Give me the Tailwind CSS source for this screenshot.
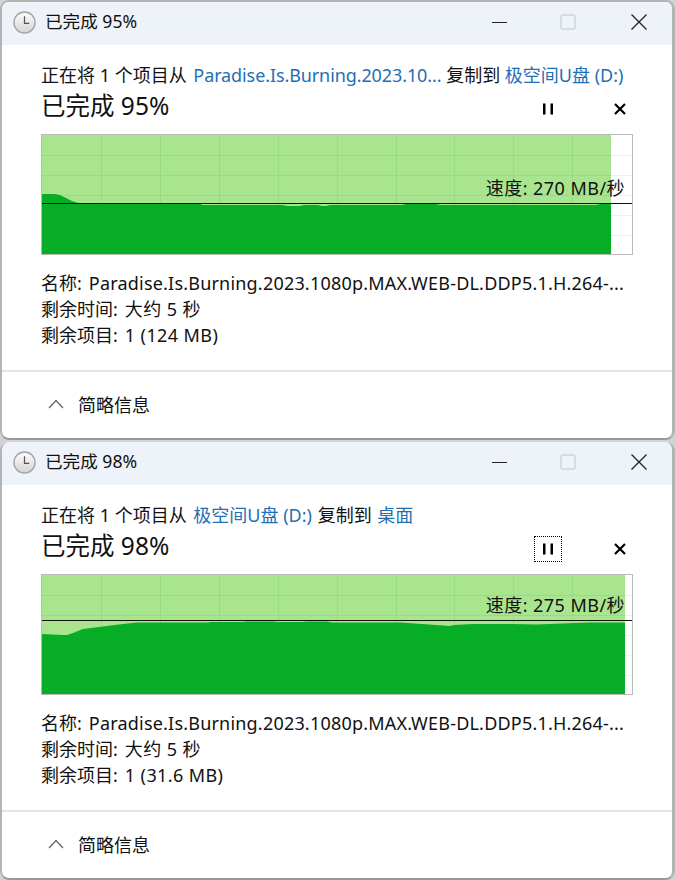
<!DOCTYPE html>
<html lang="zh-CN">
<head>
  <meta charset="UTF-8" />
  <meta name="viewport" content="width=device-width, initial-scale=1" />
  <title>已完成</title>
  <script src="https://cdn.jsdelivr.net/npm/@tailwindcss/browser@4"></script>
</head>
<body class="w-[675px] h-[880px] overflow-hidden bg-[#d2d2d2] text-[#111] font-['Noto_Sans','Noto_Sans_CJK_SC',sans-serif]">

  <!-- Window 1 -->
  <section class="h-[440px] bg-white border-x-[2px] border-t-[2px] border-b-[2px] border-x-[#b4b4b4] border-t-[#b4b4b4] border-b-[#9a9a9a] border-r-[3px] rounded-t-[9px] rounded-b-[9px] overflow-hidden">
    <header class="h-[43px] bg-[#edf3f8] flex items-center pl-[11px] pb-[3px]">
      <svg class="w-[23px] h-[23px] shrink-0" viewBox="0 0 24 24">
        <defs>
          <linearGradient id="clockFace" x1="0" y1="0" x2="0" y2="1">
            <stop offset="0" stop-color="#fdfdfd" />
            <stop offset="1" stop-color="#d4d4d4" />
          </linearGradient>
        </defs>
        <circle cx="12" cy="12" r="11" fill="url(#clockFace)" stroke="#a4a4a4" stroke-width="1.4" />
        <path d="M12 5.500V13H17" fill="none" stroke="#555" stroke-width="1.3" />
      </svg>
      <span class="ml-[9px] text-[17.6px] leading-none">已完成 95%</span>
      <div class="ml-auto flex items-center">
        <svg class="w-4 h-4" viewBox="0 0 16 16"><path d="M1 8.500H16" stroke="#222" stroke-width="1.2" /></svg>
        <svg class="w-4 h-4 ml-[53px]" viewBox="0 0 16 16"><rect x="1" y="1" width="14" height="14" rx="1.500" fill="#edf3f8" stroke="#cfd3d6" stroke-width="1.4" /></svg>
        <svg class="w-4 h-4 ml-[55px] mr-[25px]" viewBox="0 0 16 16"><path d="M.5.5L15.500 15.500M15.500.5L.5 15.500" stroke="#222" stroke-width="1.3" /></svg>
      </div>
    </header>
    <div class="pl-[39px] pt-[17px] text-[18px] leading-[26px]">
      <p class="whitespace-nowrap">正在将 1 个项目从 <span class="ml-[2px] tracking-[-.1px] text-[#1f6fb5]">Paradise.Is.Burning.2023.10...</span> 复制到 <span class="text-[#1f6fb5]">极空间U盘 (D:)</span></p>
      <div class="h-[36px] flex items-center">
        <h2 class="text-[24.5px] leading-none">已完成 95%</h2>
        <div class="ml-auto flex items-center mt-[5px]">
          <div class="w-7 h-[26px] flex items-center justify-center">
            <svg class="w-3 h-3" viewBox="0 0 12 12"><path d="M1 .5V11.500H3.500V.5ZM8.500 .5V11.500H11V.5Z" fill="#000" /></svg>
          </div>
          <div class="w-7 h-[26px] ml-[44px] mr-[38px] flex items-center justify-center">
            <svg class="w-3 h-3" viewBox="0 0 12 12"><path d="M1 1L11 11M11 1L1 11" stroke="#000" stroke-width="2.2" /></svg>
          </div>
        </div>
      </div>
      <div class="relative w-[592px] h-[121px] mt-[10px] border border-[#b9b9b9]">
        <svg class="block w-[590px] h-[119px]" viewBox="0 0 590 119">
          <rect width="590" height="119" fill="#fff" />
          <rect width="569" height="119" fill="#a9e58f" />
          <path d="M59.500 0V119M118.500 0V119M177.500 0V119M236.500 0V119M295.500 0V119M354.500 0V119M412.500 0V119M471.500 0V119M530.500 0V119" stroke="#95dc83" />
          <path d="M0 20.500H590M0 40.500H590M0 60.500H590M0 80.500H590M0 100.500H590" stroke="#95dc83" />
          <path d="M569 0V119H590V0Z" fill="#fff" opacity=".78" />
          <path d="M0 59H12L18 60L24 63L30 66L36 68H158L160 70H240L246 71H258L262 70H276L280 71H284L288 70H360L364 69H394L398 70H554L558 69H569V119H0Z" fill="#06ad25" />
          <path d="M0 68.500H590" stroke="#111" />
        </svg>
        <span class="absolute right-[7px] top-[41px] tracking-[.45px] leading-[24px] whitespace-nowrap">速度: 270 MB/秒</span>
      </div>
      <dl class="mt-[15px]">
        <div class="flex whitespace-nowrap"><dt>名称:</dt><dd class="ml-[7px] tracking-[.2px]">Paradise.Is.Burning.2023.1080p.MAX.WEB-DL.DDP5.1.H.264-...</dd></div>
        <div class="flex"><dt>剩余时间:</dt><dd class="ml-[7px] tracking-[.4px]">大约 5 秒</dd></div>
        <div class="flex"><dt>剩余项目:</dt><dd class="ml-[7px] tracking-[.4px]">1 (124 MB)</dd></div>
      </dl>
    </div>
    <div class="mt-[22px] border-t-[2px] border-[#e4e4e4] h-[66px] flex items-center pl-[46px]">
      <svg class="w-4 h-[10px]" viewBox="0 0 16 10"><path d="M1 9L8 1.500L15 9" fill="none" stroke="#666" stroke-width="1.3" /></svg>
      <span class="ml-[14px] mt-[2px] text-[18px]">简略信息</span>
    </div>
  </section>

  <!-- Window 2 -->
  <section class="mt-[2px] h-[438px] bg-white border-x-[2px] border-b-[2px] border-x-[#b4b4b4] border-b-[#9a9a9a] border-r-[3px] rounded-t-[9px] rounded-b-[9px] overflow-hidden">
    <header class="h-[43px] bg-[#edf3f8] flex items-center pl-[11px] pb-[3px]">
      <svg class="w-[23px] h-[23px] shrink-0" viewBox="0 0 24 24">
        <circle cx="12" cy="12" r="11" fill="url(#clockFace)" stroke="#a4a4a4" stroke-width="1.4" />
        <path d="M12 5.500V13H17" fill="none" stroke="#555" stroke-width="1.3" />
      </svg>
      <span class="ml-[9px] text-[17.6px] leading-none">已完成 98%</span>
      <div class="ml-auto flex items-center">
        <svg class="w-4 h-4" viewBox="0 0 16 16"><path d="M1 8.500H16" stroke="#222" stroke-width="1.2" /></svg>
        <svg class="w-4 h-4 ml-[53px]" viewBox="0 0 16 16"><rect x="1" y="1" width="14" height="14" rx="1.500" fill="#edf3f8" stroke="#cfd3d6" stroke-width="1.4" /></svg>
        <svg class="w-4 h-4 ml-[55px] mr-[25px]" viewBox="0 0 16 16"><path d="M.5.5L15.500 15.500M15.500.5L.5 15.500" stroke="#222" stroke-width="1.3" /></svg>
      </div>
    </header>
    <div class="pl-[39px] pt-[17px] text-[18px] leading-[26px]">
      <p class="whitespace-nowrap">正在将 1 个项目从 <span class="ml-[2px] text-[#1f6fb5]">极空间U盘 (D:)</span> <span class="ml-[1px]">复制到</span> <span class="ml-[1px] text-[#1f6fb5]">桌面</span></p>
      <div class="h-[36px] flex items-center">
        <h2 class="text-[24.5px] leading-none">已完成 98%</h2>
        <div class="ml-auto flex items-center mt-[5px]">
          <div class="w-7 h-[26px] flex items-center justify-center border border-dotted border-black">
            <svg class="w-3 h-3" viewBox="0 0 12 12"><path d="M1 .5V11.500H3.500V.5ZM8.500 .5V11.500H11V.5Z" fill="#000" /></svg>
          </div>
          <div class="w-7 h-[26px] ml-[44px] mr-[38px] flex items-center justify-center">
            <svg class="w-3 h-3" viewBox="0 0 12 12"><path d="M1 1L11 11M11 1L1 11" stroke="#000" stroke-width="2.2" /></svg>
          </div>
        </div>
      </div>
      <div class="relative w-[592px] h-[121px] mt-[10px] border border-[#b9b9b9]">
        <svg class="block w-[590px] h-[119px]" viewBox="0 0 590 119">
          <rect width="590" height="119" fill="#fff" />
          <rect width="583" height="119" fill="#a9e58f" />
          <path d="M59.500 0V119M118.500 0V119M177.500 0V119M236.500 0V119M295.500 0V119M354.500 0V119M412.500 0V119M471.500 0V119M530.500 0V119" stroke="#95dc83" />
          <path d="M0 20.500H590M0 40.500H590M0 60.500H590M0 80.500H590M0 100.500H590" stroke="#95dc83" />
          <path d="M583 0V119H590V0Z" fill="#fff" opacity=".78" />
          <path d="M0 59L21 60H25L31 58L41 54L61 51.500L81 49L95 47.500H165L170 47H201L205 46.500H231L235 47H260L265 46.500H285L290 47.500H358L380 49L408 51L412 50L431 49H470L495 49.500L520 48.500L548 47.500H583V119H0Z" fill="#06ad25" />
          <path d="M0 45.500H590" stroke="#111" />
        </svg>
        <span class="absolute right-[7px] top-[18px] tracking-[.45px] leading-[24px] whitespace-nowrap">速度: 275 MB/秒</span>
      </div>
      <dl class="mt-[15px]">
        <div class="flex whitespace-nowrap"><dt>名称:</dt><dd class="ml-[7px] tracking-[.2px]">Paradise.Is.Burning.2023.1080p.MAX.WEB-DL.DDP5.1.H.264-...</dd></div>
        <div class="flex"><dt>剩余时间:</dt><dd class="ml-[7px] tracking-[.4px]">大约 5 秒</dd></div>
        <div class="flex"><dt>剩余项目:</dt><dd class="ml-[7px] tracking-[.4px]">1 (31.6 MB)</dd></div>
      </dl>
    </div>
    <div class="mt-[22px] border-t-[2px] border-[#e4e4e4] h-[66px] flex items-center pl-[46px]">
      <svg class="w-4 h-[10px]" viewBox="0 0 16 10"><path d="M1 9L8 1.500L15 9" fill="none" stroke="#666" stroke-width="1.3" /></svg>
      <span class="ml-[14px] mt-[2px] text-[18px]">简略信息</span>
    </div>
  </section>

</body>
</html>
